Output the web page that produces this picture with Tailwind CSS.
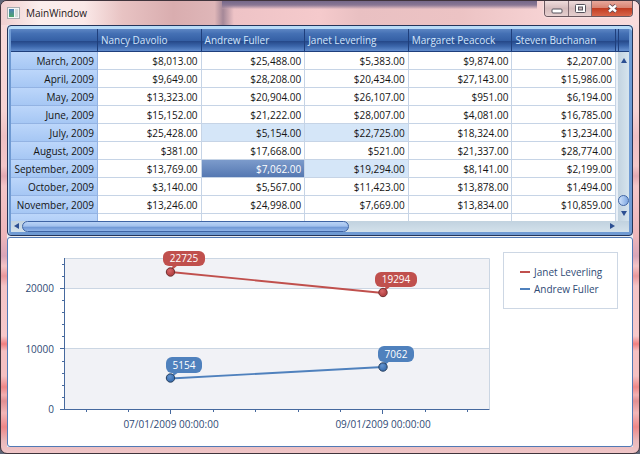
<!DOCTYPE html>
<html lang="en">
<head>
<meta charset="utf-8">
<meta name="viewport" content="width=device-width, initial-scale=1">
<title>MainWindow</title>
<script src="https://cdn.jsdelivr.net/npm/@tailwindcss/browser@4"></script>
</head>
<body class="h-screen overflow-hidden bg-[#5d6476] font-['Open_Sans','Noto_Sans',sans-serif] text-[10px] leading-[14px] text-[#141414]">
<div class="flex h-full flex-col overflow-hidden rounded-[7px] border border-[#40343c] bg-[linear-gradient(180deg,#f8dcdc_0px,#f6d3d3_110px,#eec0c4_135px,#f3c6c8_165px,#e3a9b2_175px,#f3c6c8_185px,#eeb6ba_235px,#d9a5b8_255px,#f4c4c6_265px,#e9989c_275px,#f4c4c6_285px,#f6c8ca_335px,#f07f80_343px,#f4c0c2_350px,#f4c0c2_375px,#ee8788_386px,#f2b0b2_394px,#e28f92_400px,#f2b6b8_412px,#ee8788_426px,#e9b8ba_440px,#f0c6c8_452px)]">

  <header class="relative flex h-6 shrink-0 items-start bg-[linear-gradient(90deg,#f0cfd0_0%,#fbeeed_6%,#fbe9e8_13%,#e8c3c3_19%,#d9adaf_27%,#dfb6b8_33.5%,#a58898_34.8%,#eec3c6_36.5%,#f5cacc_50%,#e9c0c2_56%,#ecc3c4_72%,#f6d2d3_85%,#f9dcdc_100%)]">
    <div class="absolute top-0 right-[16%] left-[34.7%] h-2 bg-linear-to-b from-[#75688a] via-[#8a7794] to-[#e3b9c1]/20"></div>
    <div class="flex flex-1 items-center gap-1.5 pt-1 pl-1.5">
      <svg class="h-3 w-[13px]" viewBox="0 0 13 12" aria-hidden="true">
        <defs><linearGradient id="app" x1="0" y1="0" x2="0" y2="1"><stop offset="0" stop-color="#4d7fb8"/><stop offset="1" stop-color="#4ba66b"/></linearGradient></defs>
        <rect x=".5" y=".5" width="12" height="11" fill="#f4f7f7" stroke="#a9adb0"/>
        <rect x="2" y="2" width="5" height="8" fill="url(#app)"/>
        <rect x="8" y="2" width="3" height="8" fill="#d3dcda"/>
      </svg>
      <h1 class="leading-4 text-[#1c1617]">MainWindow</h1>
    </div>
    <div class="relative mr-1.5 flex h-4 overflow-hidden rounded-b-[4px] border border-t-0 border-[#6b5860] shadow-[0_0_2px_#fff]">
      <button aria-label="Minimize" class="flex w-6 items-center justify-center border-r border-[#806b72] bg-linear-to-b from-[#efdcdc] via-[#d6bcbd] to-[#e6cfcf]">
        <svg class="mt-1 h-1.5 w-3" viewBox="0 0 12 6"><rect x="1" y="1" width="10" height="4" rx="1" fill="#fff" stroke="#56525c"/></svg>
      </button>
      <button aria-label="Maximize" class="flex w-[23px] items-center justify-center border-r border-[#806b72] bg-linear-to-b from-[#efdcdc] via-[#d6bcbd] to-[#e6cfcf]">
        <svg class="h-[9px] w-[11px]" viewBox="0 0 11 9"><rect x=".5" y=".5" width="10" height="8" rx="1" fill="#fff" stroke="#56525c"/><rect x="3.5" y="3" width="4" height="3" fill="#c9b4b6" stroke="#56525c"/></svg>
      </button>
      <button aria-label="Close" class="flex w-10 items-center justify-center bg-[linear-gradient(180deg,#e8a99c_0%,#d98472_45%,#c23d22_50%,#d8654a_100%)]">
        <svg class="h-[9px] w-[11px]" viewBox="0 0 11 9"><path d="M2 1.500 9 7.500M9 1.500 2 7.500" stroke="#594650" stroke-width="4"/><path d="M2 1.500 9 7.500M9 1.500 2 7.500" stroke="#fff" stroke-width="2.400"/></svg>
      </button>
    </div>
  </header>

  <main class="mx-1.5 mb-1.5 grid min-h-0 flex-1 grid-cols-1 grid-rows-[minmax(0,1fr)_minmax(0,1fr)] gap-px bg-[#e9edf3]">
    <section aria-label="Sales by employee" class="flex flex-col rounded-[4px] border border-[#24355a] bg-[#6f9ad3] p-[3px] shadow-[inset_0_3px_0_#b9dcf8,inset_1px_0_0_#b9dcf8]">
      <div class="flex min-h-0 flex-1">
        <div class="min-w-0 flex-1 overflow-hidden bg-white">
          <table id="rows" class="w-full table-fixed border-separate border-spacing-0">
            <colgroup><col class="w-[87px]"><col><col><col><col><col></colgroup>
            <thead>
              <tr class="h-[23px] bg-[linear-gradient(180deg,#5d86c4_0%,#4470b4_20%,#3560a5_50%,#26498a_54%,#3b66ab_75%,#5f8acb_95%)] text-left text-[#d3e5fb] [&>th]:border-r [&>th]:border-b [&>th]:border-[#1f3f7c] [&>th]:px-[3px] [&>th]:font-normal">
                <th aria-label="Month"></th><th scope="col">Nancy Davolio</th><th scope="col">Andrew Fuller</th><th scope="col">Janet Leverling</th><th scope="col">Margaret Peacock</th><th scope="col">Steven Buchanan</th>
              </tr>
            </thead>
            <tbody class="text-right [&_td]:h-[18px] [&_td]:border-r [&_td]:border-b [&_td]:border-[#c6d4e6] [&_td]:pr-[3px] [&_th]:border-r [&_th]:border-b [&_th]:border-[#93b3e3] [&_th]:bg-linear-to-b [&_th]:from-[#bcd6fa] [&_th]:to-[#a6c7f4] [&_th]:pr-[3px] [&_th]:font-normal">
              <tr><th scope="row">March, 2009</th><td>$8,013.00</td><td>$25,488.00</td><td>$5,383.00</td><td>$9,874.00</td><td>$2,207.00</td></tr>
              <tr><th scope="row">April, 2009</th><td>$9,649.00</td><td>$28,208.00</td><td>$20,434.00</td><td>$27,143.00</td><td>$15,986.00</td></tr>
              <tr><th scope="row">May, 2009</th><td>$13,323.00</td><td>$20,904.00</td><td>$26,107.00</td><td>$951.00</td><td>$6,194.00</td></tr>
              <tr><th scope="row">June, 2009</th><td>$15,152.00</td><td>$21,222.00</td><td>$28,007.00</td><td>$4,081.00</td><td>$16,785.00</td></tr>
              <tr><th scope="row">July, 2009</th><td>$25,428.00</td><td class="bg-[#d5e6f8]">$5,154.00</td><td class="bg-[#d5e6f8]">$22,725.00</td><td>$18,324.00</td><td>$13,234.00</td></tr>
              <tr><th scope="row">August, 2009</th><td>$381.00</td><td>$17,668.00</td><td>$521.00</td><td>$21,337.00</td><td>$28,774.00</td></tr>
              <tr><th scope="row">September, 2009</th><td>$13,769.00</td><td class="bg-linear-to-b from-[#7c9bcb] to-[#5578b2] text-white">$7,062.00</td><td class="bg-[#d5e6f8]">$19,294.00</td><td>$8,141.00</td><td>$2,199.00</td></tr>
              <tr><th scope="row">October, 2009</th><td>$3,140.00</td><td>$5,567.00</td><td>$11,423.00</td><td>$13,878.00</td><td>$1,494.00</td></tr>
              <tr><th scope="row">November, 2009</th><td>$13,246.00</td><td>$24,998.00</td><td>$7,669.00</td><td>$13,834.00</td><td>$10,859.00</td></tr>
              <tr><th aria-label="Next month"></th><td></td><td></td><td></td><td></td><td></td></tr>
            </tbody>
          </table>
        </div>
        <div class="flex w-[13px] flex-col border-l-2 border-[#e9f0f7] bg-linear-to-r from-[#c3d3e0] to-[#d6e4ee]">
          <div class="-ml-0.5 flex h-[23px] shrink-0 border-b border-[#1f3f7c] bg-[linear-gradient(180deg,#5d86c4_0%,#4470b4_20%,#3560a5_50%,#26498a_54%,#3b66ab_75%,#5f8acb_95%)] pl-0.5"><div class="w-px bg-[#1f3f7c]"></div></div>
          <button aria-label="Scroll up" class="flex h-4 items-center justify-center"><svg class="h-[5px] w-1.5" viewBox="0 0 6 5"><path d="M3 0 6 5H0z" fill="#2c4f92"/></svg></button>
          <div role="scrollbar" aria-label="Rows" aria-controls="rows" aria-valuenow="100" class="flex flex-1 flex-col justify-end"><div class="h-[11px] rounded-full border border-[#3f64a4] bg-linear-to-r from-[#cfe2fb] to-[#7ea6e0]"></div></div>
          <button aria-label="Scroll down" class="flex h-[15px] items-center justify-center"><svg class="h-[5px] w-1.5" viewBox="0 0 6 5"><path d="M0 0H6L3 5z" fill="#2c4f92"/></svg></button>
        </div>
      </div>
      <div class="flex h-[11px] shrink-0 bg-linear-to-b from-[#c1d2df] to-[#d3e1eb] pr-[11px]">
        <button aria-label="Scroll left" class="flex w-[11px] items-center justify-center"><svg class="h-1.5 w-[5px]" viewBox="0 0 5 6"><path d="M5 0V6L0 3z" fill="#2c4f92"/></svg></button>
        <div role="scrollbar" aria-label="Columns" aria-controls="rows" aria-orientation="horizontal" aria-valuenow="0" class="flex flex-1"><div class="w-[56%] rounded-full border border-[#3f64a4] bg-[linear-gradient(180deg,#b9d3f6_0%,#a3c2ee_45%,#7199d6_60%,#8fb3e8_100%)]"></div></div>
        <button aria-label="Scroll right" class="flex w-3 items-center justify-center"><svg class="h-1.5 w-[5px]" viewBox="0 0 5 6"><path d="M0 0V6L5 3z" fill="#2c4f92"/></svg></button>
      </div>
    </section>

    <section aria-label="Sales chart" class="flex items-start rounded-[3px] border border-[#5279b5] bg-white">
      <svg class="h-full min-w-0 flex-1" viewBox="8 238 495 207" preserveAspectRatio="xMinYMin meet" role="img" aria-label="Line chart of the selected cells" font-size="10">
        <defs>
          <radialGradient id="r" cx=".4" cy=".35"><stop offset="0" stop-color="#d9686a"/><stop offset="1" stop-color="#b54445"/></radialGradient>
          <radialGradient id="b" cx=".4" cy=".35"><stop offset="0" stop-color="#6394d0"/><stop offset="1" stop-color="#3f73b3"/></radialGradient>
        </defs>
        <path d="M65 258H489V288H65zM65 349H489V409H65z" fill="#f1f2f6"/>
        <path d="M65 258.500H489.500V409M65 288.500H489M65 348.500H489" fill="none" stroke="#cbd6e3"/>
        <path d="M64.500 258V409.500M60 288.500H64M60 348.500H64M60 409.500H489.500M170.500 409V414M382.500 409V414" fill="none" stroke="#46699e"/>
        <path d="M62 264.500H64M62 276.500H64M62 300.500H64M62 312.500H64M62 324.500H64M62 336.500H64M62 361.500H64M62 373.500H64M62 385.500H64M62 397.500H64M86.500 410V412M128.500 410V412M213.500 410V412M255.500 410V412M298.500 410V412M340.500 410V412M425.500 410V412M467.500 410V412" stroke="#46699e"/>
        <path d="M170.500 272 383 293" stroke="#c0504d" stroke-width="1.800"/>
        <path d="M170.500 378.500 383 367" stroke="#4f81bd" stroke-width="1.800"/>
        <path d="M170.500 271.500 173 265H178zM383 292.500 386 286H391z" fill="#c0504d"/>
        <path d="M170.500 378 174 372H179zM383 367 385 360H391z" fill="#4f81bd"/>
        <circle cx="170.500" cy="272" r="4.200" fill="url(#r)" stroke="#6e2f30"/>
        <circle cx="383" cy="292.500" r="4.200" fill="url(#r)" stroke="#6e2f30"/>
        <circle cx="170.500" cy="378" r="4.200" fill="url(#b)" stroke="#27405f"/>
        <circle cx="383" cy="367" r="4.200" fill="url(#b)" stroke="#27405f"/>
        <rect x="163" y="251" width="42" height="15" rx="6" fill="#c0504d"/>
        <rect x="375" y="272" width="42" height="15" rx="6" fill="#c0504d"/>
        <rect x="166" y="357" width="36" height="16" rx="6" fill="#4f81bd"/>
        <rect x="378" y="346" width="36" height="16" rx="6" fill="#4f81bd"/>
        <g fill="#fff" text-anchor="middle"><text x="184" y="262">22725</text><text x="396" y="283">19294</text><text x="184" y="369">5154</text><text x="396" y="358">7062</text></g>
        <g fill="#2f4a75" text-anchor="end"><text x="54" y="292">20000</text><text x="54" y="353">10000</text><text x="54" y="413">0</text></g>
        <g fill="#2f4a75" text-anchor="middle"><text x="171" y="428">07/01/2009 00:00:00</text><text x="383" y="428">09/01/2009 00:00:00</text></g>
      </svg>
      <ul class="mt-3.5 mr-3.5 flex w-[115px] shrink-0 flex-col gap-[3px] border border-[#cdd7e4] px-4 py-3 text-[#2f4a75]">
        <li class="flex items-center gap-1 whitespace-nowrap"><span class="h-0.5 w-2.5 shrink-0 bg-[#c0504d]"></span>Janet Leverling</li>
        <li class="flex items-center gap-1 whitespace-nowrap"><span class="h-0.5 w-2.5 shrink-0 bg-[#4f81bd]"></span>Andrew Fuller</li>
      </ul>
    </section>
  </main>
</div>
</body>
</html>
